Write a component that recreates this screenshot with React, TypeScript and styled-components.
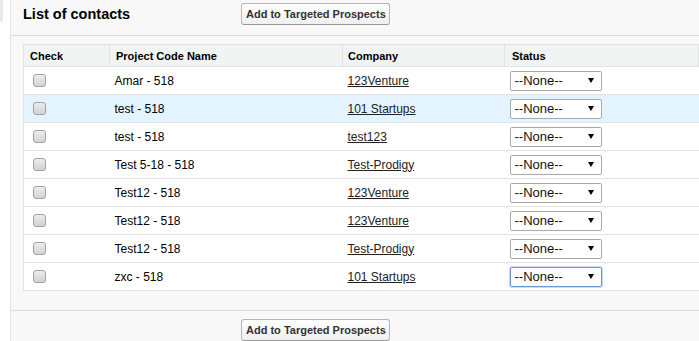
import { FC } from 'react';
import styled, { createGlobalStyle } from 'styled-components';

const Global = createGlobalStyle`
body{
  margin: 0;
  background: #fff;
  overflow: hidden;
  font-family: "Liberation Sans", Arial, sans-serif;
  color: #000;
}
`

const Page = styled.div`
display: flex;
height: 341px;
.gutter{
  width: 10px;
  flex: none;
  position: relative;
  background: #fff;
  &::before{
    content: '';
    position: absolute;
    left: 0;
    top: 0;
    width: 3px;
    height: 22px;
    background: #e9e9e9;
    border-bottom-right-radius: 3px;
  }
}
`

const Panel = styled.section`
flex: 1;
min-width: 0;
background: #f8f8f8;
border-left: 1px solid #e4e4e4;
display: flex;
flex-direction: column;
`

const Bar = styled.div<{ $footer?: boolean }>`
display: grid;
grid-template-columns: 218px max-content;
align-items: center;
padding: ${p => (p.$footer ? '8px 0 0 12px' : '3px 0 0 12px')};
height: ${p => (p.$footer ? 'auto' : '33px')};
align-content: start;
border-top: ${p => (p.$footer ? '1px solid #dcdcdc' : 'none')};
border-bottom: ${p => (p.$footer ? 'none' : '1px solid #dcdcdc')};
.title{
  font: 700 14.5px "Liberation Sans", Arial, sans-serif;
  line-height: 22px;
}
`

const Button = styled.button`
font: 700 11px "Liberation Sans", Arial, sans-serif;
color: #333;
height: 22px;
padding: 0 3px 0 4px;
border: 1px solid #b5b5b5;
border-bottom-color: #9a9a9a;
border-radius: 3px;
background: linear-gradient(#ffffff, #efefef);
cursor: pointer;
`

const Body = styled.div`
padding: 8px 0 19px 12px;
`

const Table = styled.table`
width: 100%;
border-collapse: collapse;
table-layout: fixed;
background: #fff;
border: 1px solid #e0e3e5;
border-right: none;
`

const HeadCell = styled.th<{ $w?: number; $pad?: number }>`
box-sizing: border-box;
width: ${p => (p.$w ? `${p.$w}px` : 'auto')};
height: 22px;
padding: 0 0 0 ${p => p.$pad ?? 5}px;
text-align: left;
font: 700 11px "Liberation Sans", Arial, sans-serif;
background: #f2f3f3;
border-bottom: 1px solid #e0e3e5;
border-right: 1px solid #e0e3e5;
`

const Row = styled.tr<{ $hover?: boolean }>`
background: ${p => (p.$hover ? '#e3f3ff' : '#fff')};
td{
  height: 27px;
  padding: 0 0 0 5px;
  font-size: 12px;
  border-bottom: 1px solid #e3e3e3;
  white-space: nowrap;
}
a{
  color: #222;
  text-decoration: underline;
}
`

const Check = styled.span`
display: block;
width: 11px;
height: 11px;
margin-left: 4px;
border: 1px solid #a3a3a3;
border-radius: 3px;
background: linear-gradient(#ececec, #d3d3d3);
`

const Select = styled.div<{ $focus?: boolean }>`
box-sizing: border-box;
width: 92px;
height: 20px;
display: flex;
align-items: center;
justify-content: space-between;
padding: 0 7px 0 4px;
border: 1px solid ${p => (p.$focus ? '#6f95d6' : '#a9a9a9')};
box-shadow: ${p => (p.$focus ? '0 0 0 1px rgba(111,149,214,0.35)' : 'none')};
border-radius: 2px;
background: #fff;
font: 400 13px "Liberation Sans", Arial, sans-serif;
color: #111;
.arrow{
  width: 0;
  height: 0;
  border-left: 3px solid transparent;
  border-right: 3px solid transparent;
  border-top: 5px solid #000;
}
`

const contacts = [
  { name: 'Amar - 518', company: '123Venture' },
  { name: 'test - 518', company: '101 Startups', hover: true },
  { name: 'test - 518', company: 'test123' },
  { name: 'Test 5-18 - 518', company: 'Test-Prodigy' },
  { name: 'Test12 - 518', company: '123Venture' },
  { name: 'Test12 - 518', company: '123Venture' },
  { name: 'Test12 - 518', company: 'Test-Prodigy' },
  { name: 'zxc - 518', company: '101 Startups', focus: true },
];

const App: FC = () => {
  return (
    <Page>
      <Global />
      <div className="gutter" />
      <Panel>
        <Bar>
          <div className="title">List of contacts</div>
          <Button>Add to Targeted Prospects</Button>
        </Bar>
        <Body>
          <Table>
            <thead>
              <tr>
                <HeadCell $w={86} $pad={6}>Check</HeadCell>
                <HeadCell $w={233} $pad={6}>Project Code Name</HeadCell>
                <HeadCell $w={162} $pad={5}>Company</HeadCell>
                <HeadCell $pad={7}>Status</HeadCell>
              </tr>
            </thead>
            <tbody>
              {contacts.map((c, i) => (
                <Row key={i} $hover={c.hover}>
                  <td><Check /></td>
                  <td>{c.name}</td>
                  <td><a href="#">{c.company}</a></td>
                  <td>
                    <Select $focus={c.focus}>
                      <span>--None--</span>
                      <span className="arrow" />
                    </Select>
                  </td>
                </Row>
              ))}
            </tbody>
          </Table>
        </Body>
        <Bar $footer>
          <div />
          <Button>Add to Targeted Prospects</Button>
        </Bar>
      </Panel>
    </Page>
  );
};

export default App;
